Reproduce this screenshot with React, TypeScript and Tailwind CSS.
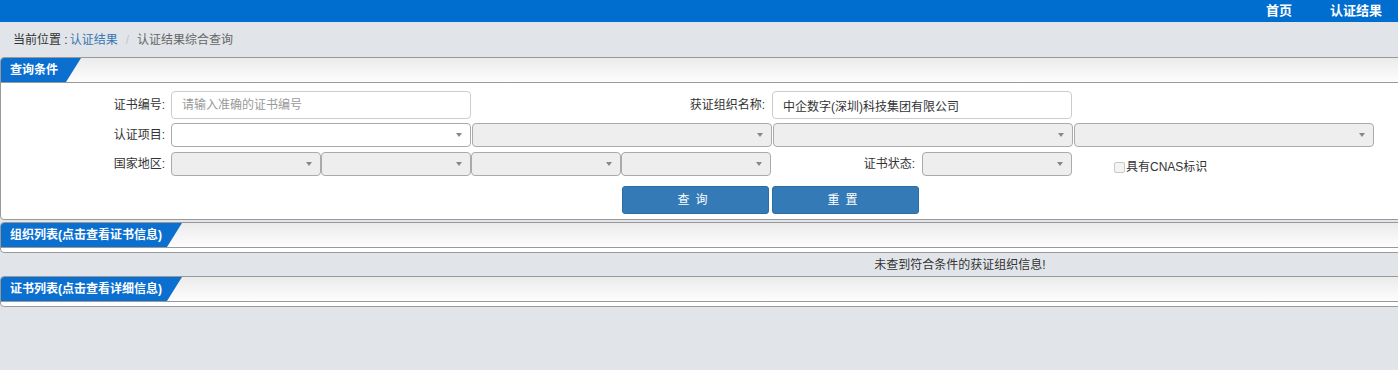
import type { ReactNode } from 'react';

const font = { fontFamily: '"Liberation Sans", "Noto Sans CJK SC", sans-serif' };

function Arrow() {
  return (
    <span className="absolute right-[8px] top-1/2 -translate-y-1/2 h-0 w-0 border-x-[3.5px] border-t-[4px] border-x-transparent border-t-[#888]" />
  );
}

function Select({ w, disabled = true }: { w: string; disabled?: boolean }) {
  return (
    <div
      className={`relative h-full shrink-0 rounded-[4px] border border-[#aaa] ${w} ${
        disabled ? 'bg-[#eeeeee]' : 'bg-white'
      }`}
    >
      <Arrow />
    </div>
  );
}

function Panel({ title, tabW, children }: { title: string; tabW: string; children?: ReactNode }) {
  return (
    <div className="w-[1920px] overflow-hidden rounded-[4px] border border-[#999] bg-white">
      <div className="flex h-[25px] border-b border-[#999] bg-gradient-to-b from-[#ebebeb] to-[#fdfdfd]">
        <div
          className={`flex h-full items-center bg-[#0a6fcf] pl-[9px] text-[12px] font-bold text-white [clip-path:polygon(0_0,100%_0,calc(100%-15px)_100%,0_100%)] ${tabW}`}
        >
          {title}
        </div>
      </div>
      {children ?? <div className="h-[4px]" />}
    </div>
  );
}

export default function App() {
  return (
    <div className="h-[370px] w-[1398px] overflow-hidden bg-[#e1e5e9] text-[12px] text-[#333]" style={font}>
      {/* top bar */}
      <div className="flex h-[22px] items-center justify-end gap-[38px] bg-[#006ecf] pr-[16px] text-[13px] font-bold text-white">
        <span>首页</span>
        <span>认证结果</span>
      </div>

      {/* breadcrumb */}
      <div className="flex h-[35px] items-center pl-[13px] text-[12px]">
        <span className="text-[#333]">当前位置 :</span>
        <span className="ml-[2px] text-[#3a76b4]">认证结果</span>
        <span className="mx-[8px] text-[#c4c4c4]">/</span>
        <span className="text-[#666]">认证结果综合查询</span>
      </div>

      {/* query panel */}
      <Panel title="查询条件" tabW="w-[80px]">
        <div className="pb-[5px] pt-[8px]">
          <div className="flex h-[28px] items-center">
            <label className="w-[170px] shrink-0 pr-[6px] text-right">证书编号:</label>
            <input
              className="h-full w-[300px] rounded-[4px] border border-[#ccc] px-[10px] text-[12px] text-[#333] outline-none placeholder:text-[#999]"
              placeholder="请输入准确的证书编号"
              style={font}
            />
            <label className="w-[301px] shrink-0 pr-[7px] text-right">获证组织名称:</label>
            <input
              className="h-full w-[300px] rounded-[4px] border border-[#ccc] px-[10px] text-[12px] text-[#333] outline-none"
              defaultValue="中企数字(深圳)科技集团有限公司"
              style={font}
            />
          </div>

          <div className="mt-[4px] flex h-[24px] items-center gap-[1px]">
            <label className="w-[169px] shrink-0 pr-[5px] text-right">认证项目:</label>
            <Select w="w-[300px]" disabled={false} />
            <Select w="w-[300px]" />
            <Select w="w-[300px]" />
            <Select w="w-[300px]" />
          </div>

          <div className="mt-[5px] flex h-[24px] items-center">
            <label className="w-[170px] shrink-0 pr-[6px] text-right">国家地区:</label>
            <Select w="w-[150px]" />
            <Select w="w-[150px]" />
            <Select w="w-[150px]" />
            <Select w="w-[150px]" />
            <label className="w-[151px] shrink-0 pr-[7px] text-right">证书状态:</label>
            <Select w="w-[150px]" />
            <span className="ml-[42px] h-[11px] w-[11px] shrink-0 translate-y-[3px] rounded-[2px] border border-[#c8c8c8] bg-[#f4f4f4]" />
            <span className="ml-[1px] translate-y-[3px]">具有CNAS标识</span>
          </div>

          <div className="mt-[10px] flex h-[28px] items-center pl-[621px]">
            <button
              className="h-full w-[147px] rounded-[3px] border border-[#2e6da4] bg-[#337ab7] text-[12px] tracking-[6px] text-white"
              style={font}
            >
              查询
            </button>
            <button
              className="ml-[3px] h-full w-[147px] rounded-[3px] border border-[#2e6da4] bg-[#337ab7] text-[12px] tracking-[6px] text-white"
              style={font}
            >
              重置
            </button>
          </div>
        </div>
      </Panel>

      <div className="mt-[2px]">
        <Panel title="组织列表(点击查看证书信息)" tabW="w-[181px]" />
      </div>

      <div className="flex h-[23px] w-[1920px] items-center justify-center text-[12px] text-[#333]">
        未查到符合条件的获证组织信息!
      </div>

      <Panel title="证书列表(点击查看详细信息)" tabW="w-[181px]" />
    </div>
  );
}
